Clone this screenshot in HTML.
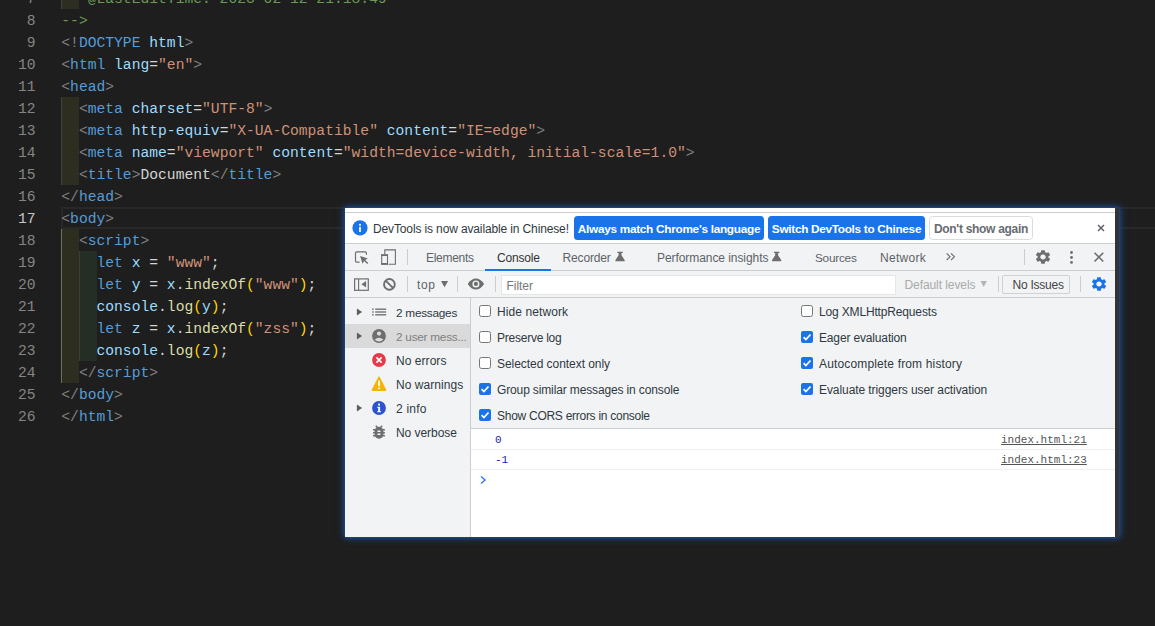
<!DOCTYPE html>
<html lang="en">
<head>
<meta charset="UTF-8">
<title>index.html</title>
<style>
*{box-sizing:border-box;margin:0;padding:0}
html,body{width:1155px;height:626px;overflow:hidden;background:#1e1e1e}
body{position:relative;font-family:"Liberation Sans",sans-serif}
.abs{position:absolute}
/* ---------- editor ---------- */
#ed{position:absolute;left:0;top:0;width:1155px;height:626px;overflow:hidden;font-family:"Liberation Mono",monospace;font-size:14.667px;color:#d4d4d4}
.ln{position:absolute;left:0;width:35.5px;height:22px;line-height:22px;text-align:right;color:#858585;white-space:pre}
.ln.cur{color:#c6c6c6}
.cl{position:absolute;left:61.3px;height:22px;line-height:22px;white-space:pre}
.g{color:#808080}.t{color:#569cd6}.a{color:#9cdcfe}.s{color:#ce9178}.c{color:#6a9955}.f{color:#dcdcaa}.y{color:#ffd700}
.ib{position:absolute;width:18px}
.i1{left:61px;background:#2e2e20;border-left:1px solid #404040}
.i2{left:79px;background:#252e25;border-left:1px solid #3a3f3a}
#curline{position:absolute;left:61px;top:207px;width:1100px;height:22px;border:2px solid #282828;border-right:0}
</style>
</head>
<body>
<div id="ed">
  <div class="ib i1" style="top:-13px;height:22px"></div>
  <div class="ib i1" style="top:97px;height:88px"></div>
  <div class="ib i1" style="top:229px;height:154px;border-left-color:#707060"></div>
  <div class="ib i2" style="top:251px;height:110px"></div>
  <div id="curline"></div>

  <div class="ln" style="top:-12px">7</div>
  <div class="ln" style="top:10px">8</div>
  <div class="ln" style="top:32px">9</div>
  <div class="ln" style="top:54px">10</div>
  <div class="ln" style="top:76px">11</div>
  <div class="ln" style="top:98px">12</div>
  <div class="ln" style="top:120px">13</div>
  <div class="ln" style="top:142px">14</div>
  <div class="ln" style="top:164px">15</div>
  <div class="ln" style="top:186px">16</div>
  <div class="ln cur" style="top:208px">17</div>
  <div class="ln" style="top:230px">18</div>
  <div class="ln" style="top:252px">19</div>
  <div class="ln" style="top:274px">20</div>
  <div class="ln" style="top:296px">21</div>
  <div class="ln" style="top:318px">22</div>
  <div class="ln" style="top:340px">23</div>
  <div class="ln" style="top:362px">24</div>
  <div class="ln" style="top:384px">25</div>
  <div class="ln" style="top:406px">26</div>

  <div class="cl c" style="top:-12px"> * @LastEditTime: 2023-02-12 21:18:49</div>
  <div class="cl c" style="top:10px">--&gt;</div>
  <div class="cl" style="top:32px"><span class="g">&lt;!</span><span class="t">DOCTYPE</span><span class="a"> html</span><span class="g">&gt;</span></div>
  <div class="cl" style="top:54px"><span class="g">&lt;</span><span class="t">html</span> <span class="a">lang</span>=<span class="s">"en"</span><span class="g">&gt;</span></div>
  <div class="cl" style="top:76px"><span class="g">&lt;</span><span class="t">head</span><span class="g">&gt;</span></div>
  <div class="cl" style="top:98px">  <span class="g">&lt;</span><span class="t">meta</span> <span class="a">charset</span>=<span class="s">"UTF-8"</span><span class="g">&gt;</span></div>
  <div class="cl" style="top:120px">  <span class="g">&lt;</span><span class="t">meta</span> <span class="a">http-equiv</span>=<span class="s">"X-UA-Compatible"</span> <span class="a">content</span>=<span class="s">"IE=edge"</span><span class="g">&gt;</span></div>
  <div class="cl" style="top:142px">  <span class="g">&lt;</span><span class="t">meta</span> <span class="a">name</span>=<span class="s">"viewport"</span> <span class="a">content</span>=<span class="s">"width=device-width, initial-scale=1.0"</span><span class="g">&gt;</span></div>
  <div class="cl" style="top:164px">  <span class="g">&lt;</span><span class="t">title</span><span class="g">&gt;</span>Document<span class="g">&lt;/</span><span class="t">title</span><span class="g">&gt;</span></div>
  <div class="cl" style="top:186px"><span class="g">&lt;/</span><span class="t">head</span><span class="g">&gt;</span></div>
  <div class="cl" style="top:208px"><span class="g">&lt;</span><span class="t">body</span><span class="g">&gt;</span></div>
  <div class="cl" style="top:230px">  <span class="g">&lt;</span><span class="t">script</span><span class="g">&gt;</span></div>
  <div class="cl" style="top:252px">    <span class="t">let</span> <span class="a">x</span> = <span class="s">"www"</span>;</div>
  <div class="cl" style="top:274px">    <span class="t">let</span> <span class="a">y</span> = <span class="a">x</span>.<span class="f">indexOf</span><span class="y">(</span><span class="s">"www"</span><span class="y">)</span>;</div>
  <div class="cl" style="top:296px">    <span class="a">console</span>.<span class="f">log</span><span class="y">(</span><span class="a">y</span><span class="y">)</span>;</div>
  <div class="cl" style="top:318px">    <span class="t">let</span> <span class="a">z</span> = <span class="a">x</span>.<span class="f">indexOf</span><span class="y">(</span><span class="s">"zss"</span><span class="y">)</span>;</div>
  <div class="cl" style="top:340px">    <span class="a">console</span>.<span class="f">log</span><span class="y">(</span><span class="a">z</span><span class="y">)</span>;</div>
  <div class="cl" style="top:362px">  <span class="g">&lt;/</span><span class="t">script</span><span class="g">&gt;</span></div>
  <div class="cl" style="top:384px"><span class="g">&lt;/</span><span class="t">body</span><span class="g">&gt;</span></div>
  <div class="cl" style="top:406px"><span class="g">&lt;/</span><span class="t">html</span><span class="g">&gt;</span></div>
</div>


<style>
/* ---------- devtools ---------- */
#dt{position:absolute;left:345px;top:208px;width:774px;height:329px;background:#fff;box-shadow:0 0 7px 1px rgba(33,84,160,.95),0 0 3px 0 #1c4786;font-size:12px;color:#303942;overflow:hidden}
#dt .strip{position:absolute;left:770px;top:0;width:4px;height:329px;background:#333}
#dt .main{position:absolute;left:0;top:0;width:770px;height:329px;overflow:hidden}
.hl{position:absolute;left:0;width:770px;height:1px;background:#cbcdd1}
.bar{position:absolute;left:0;width:770px;background:#f1f3f4}
.tx{position:absolute;white-space:pre;line-height:16px;height:16px}
.vd{position:absolute;width:1px;background:#cbcdd1}
.btn{position:absolute;top:8px;height:24px;border-radius:3.5px;background:#1a73e8;color:#fff;font-weight:bold;line-height:26px;white-space:pre;text-align:center}
.btn.w{background:#fff;border:1px solid #dadce0;color:#666b70;line-height:22px;padding-top:1px}
.tab{color:#5f6368}
</style>
<div id="dt">
 <div class="main">
  <!-- infobar -->
  <div class="hl" style="top:4px"></div>
  <svg class="abs" style="left:7px;top:12px" width="16" height="16" viewBox="0 0 16 16"><circle cx="8" cy="7.9" r="7.6" fill="#1a73e8"/><rect x="7.1" y="6.9" width="1.8" height="5" fill="#fff"/><rect x="7.1" y="3.9" width="1.8" height="1.8" fill="#fff"/></svg>
  <div class="tx" id="t_info" style="left:28px;top:13px">DevTools is now available in Chinese!</div>
  <div class="btn" id="b1" style="left:229px;width:190px">Always match Chrome's language</div>
  <div class="btn" id="b2" style="left:423px;width:157px">Switch DevTools to Chinese</div>
  <div class="btn w" id="b3" style="left:584px;width:104px">Don't show again</div>
  <svg class="abs" style="left:751px;top:14.5px" width="10" height="10" viewBox="0 0 10 10"><path d="M2 2 L8 8 M8 2 L2 8" stroke="#5f6368" stroke-width="1.5" fill="none"/></svg>
  <div class="hl" style="top:35px"></div>

  <!-- tab bar -->
  <div class="bar" style="top:36px;height:26px"></div>
  <div class="hl" style="top:62px"></div>
  
<svg class="abs" style="left:0;top:0;z-index:5" width="770" height="329" viewBox="0 0 770 329">
 <!-- inspect -->
 <path d="M14.6 54.2 H11.6 Q10.5 54.2 10.5 53.1 V45 Q10.5 43.9 11.6 43.9 H20.3 Q21.4 43.9 21.4 45 V46.8" stroke="#6e6e6e" stroke-width="1.2" fill="none"/>
 <path d="M15.1 48.1 L22.9 50.4 L20.2 52 L23.3 55.1 L22.3 56.1 L19.2 53 L17.5 55.7 Z" fill="#6e6e6e"/>
 <!-- device -->
 <path d="M39.8 46 V41.9 H50.4 V56.2 H43.6" stroke="#6e6e6e" stroke-width="1.1" fill="none"/>
 <rect x="36.7" y="46.9" width="5.8" height="9.3" stroke="#6e6e6e" stroke-width="1.1" fill="none"/>
 <rect x="36.2" y="46.4" width="6.8" height="1.6" fill="#6e6e6e"/><rect x="36.2" y="55" width="6.8" height="1.7" fill="#6e6e6e"/>
 <!-- flasks -->
 <path d="M272.4 43.8 H277.8 V45.1 H276.5 V47.3 L279.6 52.1 Q280.1 53.3 278.9 53.3 H271.2 Q270 53.3 270.5 52.1 L273.6 47.3 V45.1 H272.4 Z" fill="#6e6e6e"/>
 <path d="M272.4 43.8 H277.8 V45.1 H276.5 V47.3 L279.6 52.1 Q280.1 53.3 278.9 53.3 H271.2 Q270 53.3 270.5 52.1 L273.6 47.3 V45.1 H272.4 Z" fill="#6e6e6e" transform="translate(156.6 0)"/>
 <!-- chevrons -->
 <path d="M601.6 45.3 L605 48.7 L601.6 52.1 M606 45.3 L609.4 48.7 L606 52.1" stroke="#6e6e6e" stroke-width="1.2" fill="none"/>
 <!-- gear, kebab, close -->
 <path d="M19.14 12.94c.04-.3.06-.61.06-.94 0-.32-.02-.64-.07-.94l2.03-1.58c.18-.14.23-.41.12-.61l-1.92-3.32c-.12-.22-.37-.29-.59-.22l-2.39.96c-.5-.38-1.03-.7-1.62-.94l-.36-2.54c-.04-.24-.24-.41-.48-.41h-3.84c-.24 0-.43.17-.47.41l-.36 2.54c-.59.24-1.13.57-1.62.94l-2.39-.96c-.22-.08-.47 0-.59.22L2.74 8.87c-.12.21-.08.47.12.61l2.03 1.58c-.05.3-.09.63-.09.94s.02.64.07.94l-2.03 1.58c-.18.14-.23.41-.12.61l1.92 3.32c.12.22.37.29.59.22l2.39-.96c.5.38 1.03.7 1.62.94l.36 2.54c.05.24.24.41.48.41h3.84c.24 0 .44-.17.47-.41l.36-2.54c.59-.24 1.13-.56 1.62-.94l2.39.96c.22.08.47 0 .59-.22l1.92-3.32c.12-.22.07-.47-.12-.61l-2.01-1.58zM12 15.6c-1.98 0-3.6-1.62-3.6-3.6s1.62-3.6 3.6-3.6 3.6 1.62 3.6 3.6-1.62 3.6-3.6 3.6z" fill="#6e6e6e" transform="translate(688.9 40.6) scale(0.76 0.70)"/>
 <circle cx="726.5" cy="44.5" r="1.45" fill="#6e6e6e"/><circle cx="726.5" cy="49.45" r="1.45" fill="#6e6e6e"/><circle cx="726.5" cy="54.4" r="1.45" fill="#6e6e6e"/>
 <path d="M749.5 44.7 L758.3 53.5 M758.3 44.7 L749.5 53.5" stroke="#6e6e6e" stroke-width="1.6" fill="none"/>
 <!-- sidebar toggle -->
 <rect x="9.6" y="70.9" width="13.7" height="11.4" stroke="#6e6e6e" stroke-width="1.2" fill="none"/>
 <path d="M13.6 70.9 V82.3" stroke="#6e6e6e" stroke-width="1.1"/>
 <path d="M21.1 73.1 V79.6 L16.4 76.35 Z" fill="#6e6e6e"/>
 <!-- clear -->
 <circle cx="44.4" cy="76.4" r="5.35" stroke="#6e6e6e" stroke-width="1.9" fill="none"/>
 <path d="M40.6 72.6 L48.2 80.2" stroke="#6e6e6e" stroke-width="1.9"/>
 <!-- dropdown arrows -->
 <path d="M96 72.9 H103.1 L99.55 79.2 Z" fill="#6e6e6e"/>
 <path d="M635.5 72.9 H641.9 L638.7 79 Z" fill="#b4b4b4"/>
 <!-- eye -->
 <path d="M122.7 75.9 Q126.3 70.4 130.9 70.4 Q135.5 70.4 139.1 75.9 Q135.5 81.4 130.9 81.4 Q126.3 81.4 122.7 75.9 Z" fill="#6e6e6e"/>
 <circle cx="130.9" cy="75.9" r="3.5" fill="#f1f3f4"/><circle cx="130.9" cy="75.9" r="2.1" fill="#6e6e6e"/>
 <!-- blue gear -->
 <path d="M19.14 12.94c.04-.3.06-.61.06-.94 0-.32-.02-.64-.07-.94l2.03-1.58c.18-.14.23-.41.12-.61l-1.92-3.32c-.12-.22-.37-.29-.59-.22l-2.39.96c-.5-.38-1.03-.7-1.62-.94l-.36-2.54c-.04-.24-.24-.41-.48-.41h-3.84c-.24 0-.43.17-.47.41l-.36 2.54c-.59.24-1.13.57-1.62.94l-2.39-.96c-.22-.08-.47 0-.59.22L2.74 8.87c-.12.21-.08.47.12.61l2.03 1.58c-.05.3-.09.63-.09.94s.02.64.07.94l-2.03 1.58c-.18.14-.23.41-.12.61l1.92 3.32c.12.22.37.29.59.22l2.39-.96c.5.38 1.03.7 1.62.94l.36 2.54c.05.24.24.41.48.41h3.84c.24 0 .44-.17.47-.41l.36-2.54c.59-.24 1.13-.56 1.62-.94l2.39.96c.22.08.47 0 .59-.22l1.92-3.32c.12-.22.07-.47-.12-.61l-2.01-1.58zM12 15.6c-1.98 0-3.6-1.62-3.6-3.6s1.62-3.6 3.6-3.6 3.6 1.62 3.6 3.6-1.62 3.6-3.6 3.6z" fill="#1a73e8" transform="translate(744.9 67.5) scale(0.76 0.71)"/>
 <!-- sidebar icons -->
 <path d="M11.9 100.4 L11.9 107.6 L17.1 104 Z" fill="#5a5f66"/><path d="M11.9 124.4 L11.9 131.6 L17.1 128 Z" fill="#5a5f66"/><path d="M11.9 196.4 L11.9 203.6 L17.1 200 Z" fill="#5a5f66"/>
 <g fill="#737373"><rect x="27.1" y="100.5" width="1.6" height="1.4"/><rect x="30.2" y="100.5" width="11" height="1.4"/><rect x="27.1" y="103.3" width="1.6" height="1.4"/><rect x="30.2" y="103.3" width="11" height="1.4"/><rect x="27.1" y="106.1" width="1.6" height="1.4"/><rect x="30.2" y="106.1" width="11" height="1.4"/></g>
 <circle cx="34" cy="128" r="6.9" fill="#6e6e6e"/><circle cx="34" cy="125.6" r="2.1" fill="#dadada"/><path d="M29.7 131.6 Q34 128 38.3 131.6 Q36.6 133.6 34 133.6 Q31.4 133.6 29.7 131.6Z" fill="#dadada"/>
 <circle cx="34" cy="152" r="6.9" fill="#e8394a"/><path d="M31.4 149.4 L36.6 154.6 M36.6 149.4 L31.4 154.6" stroke="#fff" stroke-width="1.7"/>
 <path d="M34 168.6 Q34.6 168.6 35 169.4 L41.1 181.6 Q41.6 183 40.3 183 H27.7 Q26.4 183 26.9 181.6 L33 169.4 Q33.4 168.6 34 168.6Z" fill="#f4b400"/><rect x="33.2" y="172.6" width="1.7" height="5.6" fill="#fff"/><rect x="33.2" y="179.5" width="1.7" height="1.7" fill="#fff"/>
 <circle cx="34" cy="200" r="6.9" fill="#2a53cd"/><rect x="33.1" y="195.6" width="1.9" height="1.9" rx=".6" fill="#fff"/><path d="M32.2 198.7 H35.1 V203.2 H36 V204.2 H32.2 V203.2 H33.2 V199.7 H32.2 Z" fill="#fff"/>
 <path d="M20 8h-2.81c-.45-.78-1.07-1.45-1.82-1.96L17 4.41 15.59 3l-2.17 2.17C12.96 5.06 12.49 5 12 5c-.49 0-.96.06-1.41.17L8.41 3 7 4.41l1.62 1.63C7.88 6.55 7.26 7.22 6.81 8H4v2h2.09c-.05.33-.09.66-.09 1v1H4v2h2v1c0 .34.04.67.09 1H4v2h2.81c1.04 1.79 2.97 3 5.19 3s4.15-1.21 5.19-3H20v-2h-2.09c.05-.33.09-.66.09-1v-1h2v-2h-2v-1c0-.34-.04-.67-.09-1H20V8zm-6 8h-4v-2h4v2zm0-4h-4v-2h4v2z" fill="#6e6e6e" transform="translate(25.1 215.1) scale(0.74)"/>
 <!-- checkboxes -->
 <rect x="134.5" y="97.5" width="11" height="11" rx="2" fill="#fff" stroke="#767676"/><rect x="134.5" y="123.5" width="11" height="11" rx="2" fill="#fff" stroke="#767676"/><rect x="134.5" y="149.5" width="11" height="11" rx="2" fill="#fff" stroke="#767676"/><rect x="134" y="175" width="12" height="12" rx="2" fill="#1a73e8"/><path d="M136.6 181.2 L138.9 183.6 L143.5 178.5" stroke="#fff" stroke-width="1.7" fill="none"/><rect x="134" y="201" width="12" height="12" rx="2" fill="#1a73e8"/><path d="M136.6 207.2 L138.9 209.6 L143.5 204.5" stroke="#fff" stroke-width="1.7" fill="none"/>
 <rect x="456.5" y="97.5" width="11" height="11" rx="2" fill="#fff" stroke="#767676"/><rect x="456" y="123" width="12" height="12" rx="2" fill="#1a73e8"/><path d="M458.6 129.2 L460.9 131.6 L465.5 126.5" stroke="#fff" stroke-width="1.7" fill="none"/><rect x="456" y="149" width="12" height="12" rx="2" fill="#1a73e8"/><path d="M458.6 155.2 L460.9 157.6 L465.5 152.5" stroke="#fff" stroke-width="1.7" fill="none"/><rect x="456" y="175" width="12" height="12" rx="2" fill="#1a73e8"/><path d="M458.6 181.2 L460.9 183.6 L465.5 178.5" stroke="#fff" stroke-width="1.7" fill="none"/>
</svg>

  <div class="vd" style="left:62px;top:41px;height:16px"></div>
  <div class="tx tab" id="t_el" style="left:81px;top:42px">Elements</div>
  <div class="tx" id="t_co" style="left:152px;top:42px;color:#333">Console</div>
  <div class="abs" style="left:140px;top:61px;width:66px;height:2px;background:#1a73e8"></div>
  <div class="tx tab" id="t_re" style="left:217.5px;top:42px">Recorder</div>
  <div class="tx tab" id="t_pi" style="left:312px;top:42px">Performance insights</div>
  <div class="tx tab" id="t_so" style="left:470px;top:42px">Sources</div>
  <div class="tx tab" id="t_ne" style="left:535px;top:42px">Network</div>
  <div class="vd" style="left:679px;top:41px;height:16px"></div>

  <!-- console toolbar -->
  <div class="bar" style="top:63px;height:26px"></div>
  <div class="hl" style="top:89px"></div>
  <!--TOOLICONS-->
  <div class="vd" style="left:62px;top:68px;height:16px"></div>
  <div class="tx tab" id="t_top" style="left:72px;top:68.5px">top</div>
  <div class="vd" style="left:112px;top:68px;height:16px"></div>
  <div class="vd" style="left:149.5px;top:68px;height:16px"></div>
  <div class="abs" style="left:156px;top:66.5px;width:395px;height:20px;background:#fff;border:1px solid #e4e6e8"></div>
  <div class="tx" id="t_fi" style="left:161.5px;top:70px;color:#777">Filter</div>
  <div class="tx" id="t_dl" style="left:559.5px;top:68.5px;color:#aaaaaa">Default levels</div>
  <div class="vd" style="left:652.5px;top:68px;height:16px"></div>
  <div class="abs" style="left:657px;top:66.5px;width:68px;height:19.5px;border:1px solid #cfd1d4;border-radius:2px;background:#f1f3f4"></div>
  <div class="tx" id="t_ni" style="left:667.5px;top:68.5px;color:#444">No Issues</div>
  <div class="vd" style="left:735px;top:68px;height:16px"></div>

  <!-- sidebar + settings -->
  <div class="bar" style="top:90px;height:239px;width:125px"></div>
  <div class="vd" style="left:125px;top:90px;height:239px"></div>
  <div class="bar" style="top:90px;left:126px;width:644px;height:130px"></div>
  <div class="hl" style="top:220px;left:126px;width:644px"></div>
  <div class="abs" style="left:0;top:116px;width:125px;height:24px;background:#dadada"></div>
  <!--SIDEICONS-->
  <div class="tx" id="s1" style="left:51px;top:96.5px">2 messages</div>
  <div class="tx" id="s2" style="left:51px;top:120.5px;color:#808080">2 user mess...</div>
  <div class="tx" id="s3" style="left:51px;top:144.5px">No errors</div>
  <div class="tx" id="s4" style="left:51px;top:168.5px">No warnings</div>
  <div class="tx" id="s5" style="left:51px;top:192.5px">2 info</div>
  <div class="tx" id="s6" style="left:51px;top:216.5px">No verbose</div>

  <!--CHECKS-->
  <div class="tx" id="c1" style="left:152px;top:95.5px">Hide network</div>
  <div class="tx" id="c2" style="left:152px;top:121.5px">Preserve log</div>
  <div class="tx" id="c3" style="left:152px;top:147.5px">Selected context only</div>
  <div class="tx" id="c4" style="left:152px;top:173.5px">Group similar messages in console</div>
  <div class="tx" id="c5" style="left:152px;top:199.5px">Show CORS errors in console</div>
  <div class="tx" id="c6" style="left:474px;top:95.5px">Log XMLHttpRequests</div>
  <div class="tx" id="c7" style="left:474px;top:121.5px">Eager evaluation</div>
  <div class="tx" id="c8" style="left:474px;top:147.5px">Autocomplete from history</div>
  <div class="tx" id="c9" style="left:474px;top:173.5px">Evaluate triggers user activation</div>

  <!-- console messages -->
  <div class="hl" style="top:241px;left:126px;width:644px;background:#f0f0f0"></div>
  <div class="hl" style="top:261px;left:126px;width:644px;background:#f0f0f0"></div>
  <div class="tx mono" id="m1" style="left:150px;top:224px;color:#1a1aa6">0</div>
  <div class="tx mono" id="m2" style="left:150px;top:244px;color:#1a1aa6">-1</div>
  <div class="tx mono lk" id="l1" style="left:656px;top:224px">index.html:21</div>
  <div class="tx mono lk" id="l2" style="left:656px;top:244px">index.html:23</div>
  <svg class="abs" style="left:134px;top:267px" width="8" height="10" viewBox="0 0 8 10"><path d="M2 1.5 L6 5 L2 8.5" stroke="#367cf1" stroke-width="1.5" fill="none"/></svg>
 </div>
 <div class="strip"></div>
</div>
<style>
.mono{font-family:"Liberation Mono",monospace;font-size:11px}
.lk{color:#545454;text-decoration:underline}
/*FIT*/
#t_info{font-size:12px;letter-spacing:-0.133px}
#b1{font-size:11.8px;letter-spacing:-0.285px}
#b2{font-size:11.8px;letter-spacing:-0.30px}
#b3{font-size:12px;letter-spacing:-0.291px}
#t_el{font-size:12px;letter-spacing:-0.290px}
#t_co{font-size:12px;letter-spacing:-0.172px}
#t_re{font-size:12px;letter-spacing:-0.151px}
#t_pi{font-size:12px;letter-spacing:-0.069px}
#t_so{font-size:11.8px;letter-spacing:-0.247px}
#t_ne{font-size:12px;letter-spacing:0.281px}
#t_top{font-size:12px;letter-spacing:0.606px}
#t_fi{font-size:12px;letter-spacing:-0.054px}
#t_dl{font-size:12px;letter-spacing:-0.081px}
#t_ni{font-size:12px;letter-spacing:-0.245px}
#s1{font-size:11.8px;letter-spacing:-0.257px}
#s2{font-size:11.8px;letter-spacing:-0.253px}
#s3{font-size:12px;letter-spacing:0.048px}
#s4{font-size:12px;letter-spacing:0.060px}
#s5{font-size:12px;letter-spacing:0.228px}
#s6{font-size:12px;letter-spacing:-0.053px}
#c1{font-size:12px;letter-spacing:0.088px}
#c2{font-size:12px;letter-spacing:-0.243px}
#c3{font-size:12px;letter-spacing:-0.049px}
#c4{font-size:12px;letter-spacing:-0.136px}
#c5{font-size:12px;letter-spacing:-0.272px}
#c6{font-size:12px;letter-spacing:-0.157px}
#c7{font-size:12px;letter-spacing:-0.152px}
#c8{font-size:12px;letter-spacing:0.150px}
#c9{font-size:12px;letter-spacing:-0.077px}
/*ENDFIT*/
</style>

</body>
</html>
